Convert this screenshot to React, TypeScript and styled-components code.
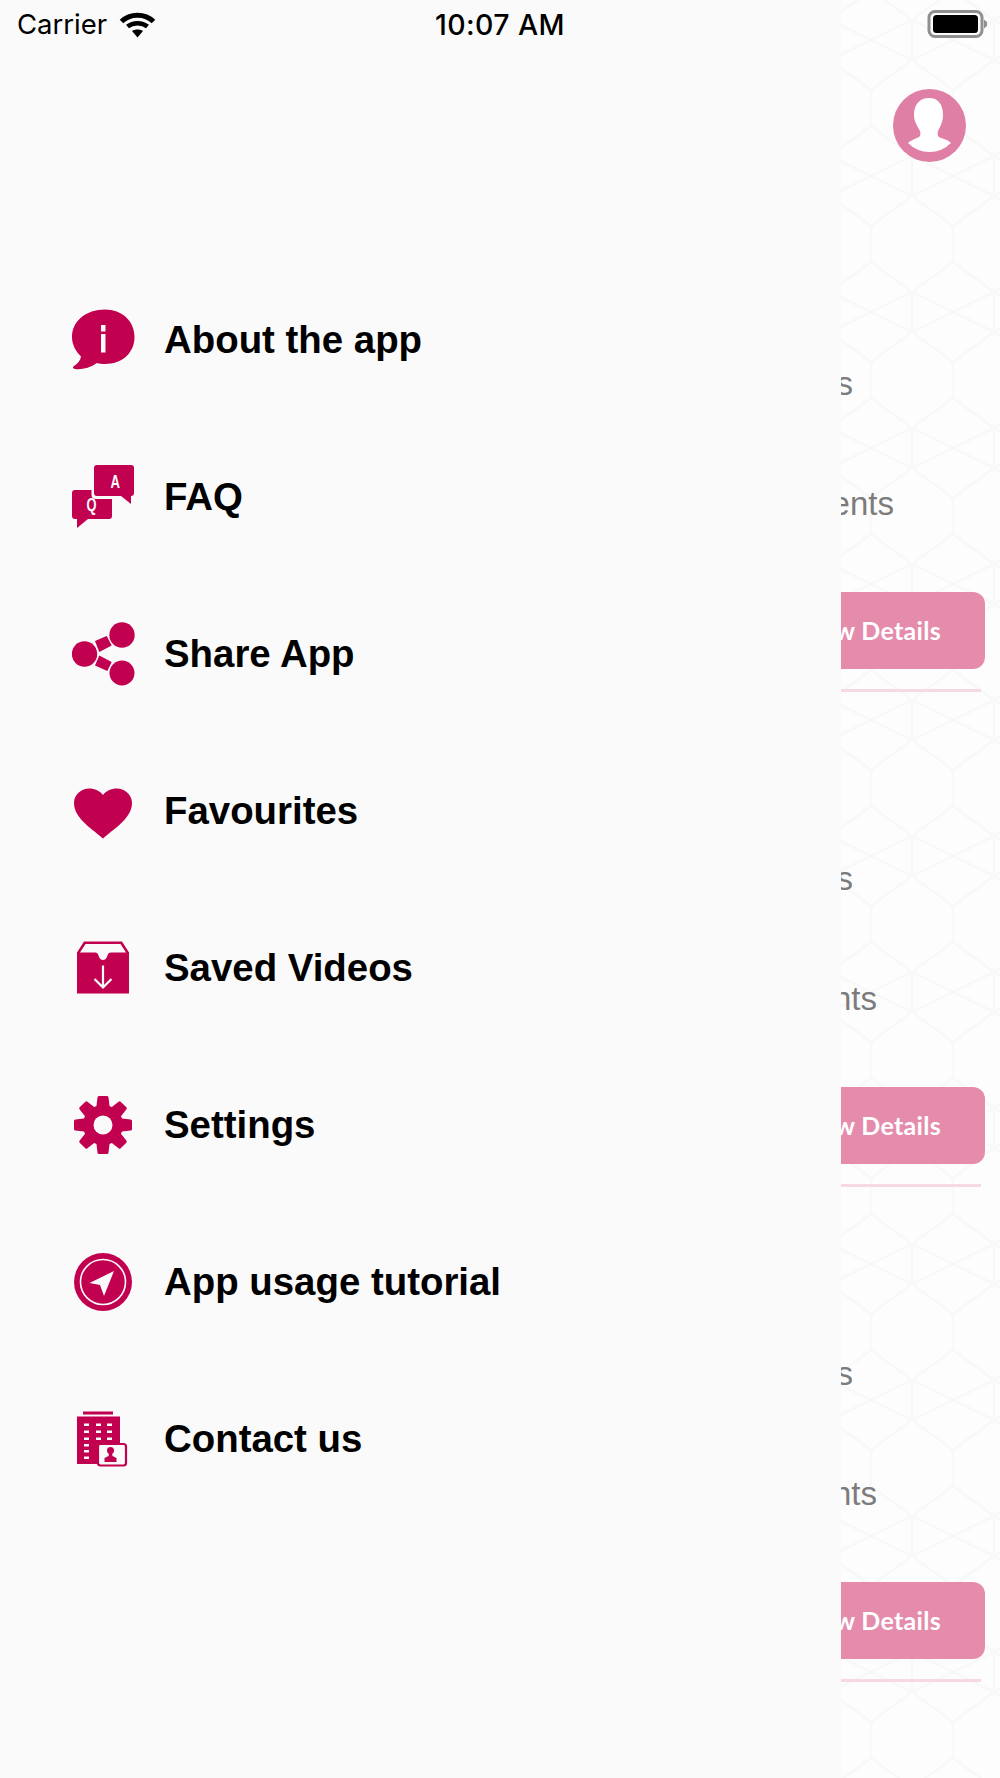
import React from 'react';
import styled, { createGlobalStyle } from 'styled-components';

const CRIMSON = '#c1004f';
const PAPER = '#fafafa';

const GlobalStyle = createGlobalStyle`
  html, body {
    margin: 0;
    padding: 0;
    background: #fdfdfd;
  }
`;

const Screen = styled.div`
  position: relative;
  display: flex;
  width: 1000px;
  height: 1778px;
  overflow: hidden;
`;

const StatusBar = styled.div`
  position: absolute;
  top: 0;
  left: 0;
  right: 0;
  height: 48px;
  padding: 0 17px;
  box-sizing: border-box;
  display: grid;
  grid-template-columns: 1fr auto 1fr;
  align-items: center;
  font-family: Inter, 'Liberation Sans', sans-serif;
  font-size: 27.500px;
  color: #000;
  z-index: 2;
`;

const Carrier = styled.div`
  display: flex;
  align-items: center;
  gap: 12px;
`;

const Clock = styled.div`
  font-weight: 500;
  font-size: 28.500px;
  letter-spacing: 0.4px;
`;

const BatteryWrap = styled.div`
  display: flex;
  justify-content: flex-end;
  margin-right: -4px;
`;

const Drawer = styled.nav`
  width: 841px;
  flex-shrink: 0;
  background: ${PAPER};
  padding-top: 261px;
  box-sizing: border-box;
`;

const MenuRow = styled.div`
  height: 157px;
  display: flex;
  align-items: center;
  padding-left: 72px;
  gap: 28px;
`;

const IconSlot = styled.div`
  width: 64px;
  height: 64px;
  flex-shrink: 0;
  svg {
    display: block;
    width: 64px;
    height: 64px;
  }
`;

const MenuLabel = styled.span`
  font-family: 'Liberation Sans', Arial, sans-serif;
  font-weight: 700;
  font-size: 38.400px;
  color: #000;
`;

const Backdrop = styled.div`
  position: relative;
  flex: 1;
  min-width: 0;
  overflow: hidden;
  background: #fdfdfd;
`;

const PatternLayer = styled.svg`
  position: absolute;
  inset: 0;
  width: 100%;
  height: 100%;
`;

const BackdropContent = styled.div`
  position: relative;
  padding-top: 89px;
`;

const AvatarRow = styled.div`
  display: flex;
  justify-content: flex-end;
  padding-right: 34px;
  height: 275px;
`;

const Card = styled.div`
  height: 495px;
  white-space: nowrap;
`;

const CardLine = styled.div<{ $inset: number; $after: number }>`
  display: flex;
  justify-content: flex-end;
  height: 39px;
  line-height: 39px;
  padding-right: ${(p) => p.$inset}px;
  margin-bottom: ${(p) => p.$after}px;
  font-family: 'Liberation Sans', Arial, sans-serif;
  font-size: 33px;
  color: #7c7c7c;
`;

const DetailsButton = styled.div`
  height: 75px;
  padding: 0 44px 2px 0;
  margin-right: 15px;
  border-radius: 0 12px 12px 0;
  background: #e58cad;
  display: flex;
  align-items: center;
  justify-content: flex-end;
  overflow: hidden;
  font-family: Lato, 'Liberation Sans', sans-serif;
  font-weight: 700;
  font-size: 25px;
  letter-spacing: 0.3px;
  color: #fff;
`;

const Divider = styled.div`
  height: 3px;
  margin: 20px 19px 0 0;
  background: #f7d9e5;
`;

function Wifi() {
  return (
    <svg width="37" height="27" viewBox="0 0 37 27">
      <path fill="none" stroke="#000" strokeWidth="5" d="M2.500 10.500 C11 2 26 2 34.500 10.500" />
      <path fill="none" stroke="#000" strokeWidth="4.500" d="M8.500 15.500 C14 11 23 11 28.500 15.500" />
      <path d="M13 20 C16 18 21 18 24 20 L18.500 26.500 Z" fill="#000" />
    </svg>
  );
}

function Battery() {
  return (
    <svg width="60" height="28" viewBox="0 0 60 28">
      <rect x="2" y="1.500" width="53" height="25" rx="6" fill="none" stroke="#8f8f8f" strokeWidth="3" />
      <rect x="6" y="5" width="45" height="18" rx="3.500" fill="#000" />
      <path d="M57 9.500 L60 12 V16 L57 18.500 Z" fill="#8f8f8f" />
    </svg>
  );
}

function Avatar() {
  return (
    <svg width="73" height="73" viewBox="0 0 73 73">
      <circle cx="36.500" cy="36.500" r="36.500" fill="#df7fa6" />
      <path
        fill="#fff"
        d="M36 9 C27 9 21 15 21 26 C21 33 25 38 27 42 C28 46 27 48 24 49 C21 50 17 52 15 54 Q24 63 36.500 63 Q49 63 58 54 C55 51 51 50 48 49 C45 48 44 46 45 42 C47 38 50 33 50 26 C50 15 45 9 36 9 Z"
      />
    </svg>
  );
}

function InfoIcon() {
  return (
    <svg viewBox="0 0 64 64">
      <path
        fill={CRIMSON}
        d="M33 1.500 C50 1.500 62.500 13 62.500 29 C62.500 45 50 56 33 56 C30 56 27 55.600 25 55 C18 60 9 62 3 61 C0.500 60.500 0.500 59 2 58 C6 55.500 8.500 52.500 9 48.500 C4 43.500 0 37 0 29 C0 13 14 1.500 33 1.500 Z"
      />
      <rect x="29" y="17" width="4.500" height="6.500" fill={PAPER} />
      <rect x="29" y="26" width="4.500" height="18.500" fill={PAPER} />
    </svg>
  );
}

function FaqIcon() {
  return (
    <svg viewBox="0 0 64 64">
      <path
        fill={CRIMSON}
        d="M25 0 H59 Q62 0 62 3 V28 Q62 31 59 31 V39 L49 31 H25 Q22 31 22 28 V3 Q22 0 25 0 Z"
      />
      <path
        fill={CRIMSON}
        d="M3 25 H19.500 V30 Q19.500 34 24 34 H40 V51 Q40 54 37 54 H16 L5 63 V54 H3 Q0 54 0 51 V28 Q0 25 3 25 Z"
      />
      <text x="38.500" y="22.500" fontFamily="'Liberation Sans', sans-serif" fontWeight="700" fontSize="19" textLength="9.500" lengthAdjust="spacingAndGlyphs" fill={PAPER}>A</text>
      <text x="14.500" y="46" fontFamily="'Liberation Sans', sans-serif" fontWeight="700" fontSize="19" textLength="10" lengthAdjust="spacingAndGlyphs" fill={PAPER}>Q</text>
    </svg>
  );
}

function ShareIcon() {
  return (
    <svg viewBox="0 0 64 64">
      <circle cx="50" cy="13" r="12.700" fill={CRIMSON} />
      <circle cx="12.500" cy="32" r="12.700" fill={CRIMSON} />
      <circle cx="50" cy="51" r="12.500" fill={CRIMSON} />
      <polygon points="23,19 34.700,14 39.700,23.500 27.300,30" fill={CRIMSON} />
      <polygon points="27.300,33.500 39.700,40 35.300,49 23,43.500" fill={CRIMSON} />
    </svg>
  );
}

function HeartIcon() {
  return (
    <svg viewBox="0 0 64 64">
      <path
        fill={CRIMSON}
        d="M31 59.500 C22 51 2 40 2 24 C2 15 10 9.500 17 9.500 C23 9.500 28 12 31 16 C34 12 39 9.500 45 9.500 C52 9.500 60 15 60 24 C60 40 40 51 31 59.500 Z"
      />
    </svg>
  );
}

function BoxIcon() {
  return (
    <svg viewBox="0 0 64 64">
      <g transform="translate(0 5.500)">
        <path
          fill={CRIMSON}
          fillRule="evenodd"
          d="M12 0 H50 L57 11 V52 H5 V11 Z M13.500 2.500 L8 11 H23 C25 11 26 12 26.500 14 C27.500 17 29 18.500 31 18.500 C33 18.500 34.500 17 35.500 14 C36 12 37 11 39 11 H54 L48.500 2.500 Z"
        />
        <path
          fill="none"
          stroke={PAPER}
          strokeWidth="2.200"
          d="M31 24 V46 M22.500 37.500 L31 46 L39.500 37.500"
        />
      </g>
    </svg>
  );
}

function GearIcon() {
  const teeth = [0, 45, 90, 135, 180, 225, 270, 315];
  return (
    <svg viewBox="0 0 64 64">
      <g fill={CRIMSON}>
        {teeth.map((angle) => (
          <path
            key={angle}
            d="M25.500 4.500 Q25.500 3 27 3 H35 Q36.500 3 36.500 4.500 L38 17 H24 Z"
            transform={`rotate(${angle} 31 32)`}
          />
        ))}
        <circle cx="31" cy="32" r="20" />
      </g>
      <circle cx="31" cy="32" r="9.500" fill={PAPER} />
    </svg>
  );
}

function NavIcon() {
  return (
    <svg viewBox="0 0 64 64">
      <circle cx="31" cy="32" r="29" fill={CRIMSON} />
      <circle cx="31" cy="32" r="22.500" fill="none" stroke={PAPER} strokeWidth="1.600" />
      <polygon points="17.500,33 42,21 32,46 28,35" fill={PAPER} />
    </svg>
  );
}

function BuildingIcon() {
  const windows: [number, number][] = [];
  [12, 24, 35].forEach((x) => {
    [16.500, 23.500, 30.500].forEach((y) => windows.push([x, y]));
  });
  [37, 43, 49.500].forEach((y) => windows.push([12, y]));
  return (
    <svg viewBox="0 0 64 64">
      <rect x="11" y="4.500" width="30" height="3" fill={CRIMSON} />
      <rect x="5" y="9.500" width="43" height="47.500" fill={CRIMSON} />
      {windows.map(([x, y]) => (
        <rect key={`${x}-${y}`} x={x} y={y} width="5" height="2.500" fill={PAPER} />
      ))}
      <rect x="26" y="37" width="28" height="21.500" rx="2.500" fill={PAPER} stroke={CRIMSON} strokeWidth="2.200" />
      <circle cx="38.500" cy="43.500" r="3.500" fill={CRIMSON} />
      <path fill={CRIMSON} d="M37 46 H40 L40.500 49 L44.500 51 V55 H32.500 V51 L36.500 49 Z" />
    </svg>
  );
}

function ArabesquePattern() {
  return (
    <PatternLayer aria-hidden="true">
      <defs>
        <pattern id="girih" width="82" height="136" patternUnits="userSpaceOnUse" x="-11" y="-10">
          <g fill="none" stroke="#f9f8f9" strokeWidth="2.500">
            <path d="M41 0 L82 30 V70 L41 100 L0 70 V30 Z" />
            <path d="M41 100 V136 M0 30 L82 70 M82 30 L0 70" />
          </g>
        </pattern>
      </defs>
      <rect width="100%" height="100%" fill="url(#girih)" />
    </PatternLayer>
  );
}

const MENU = [
  { label: 'About the app', Icon: InfoIcon },
  { label: 'FAQ', Icon: FaqIcon },
  { label: 'Share App', Icon: ShareIcon },
  { label: 'Favourites', Icon: HeartIcon },
  { label: 'Saved Videos', Icon: BoxIcon },
  { label: 'Settings', Icon: GearIcon },
  { label: 'App usage tutorial', Icon: NavIcon },
  { label: 'Contact us', Icon: BuildingIcon },
];

const CARDS = [
  { word: 'Events', inset: 106 },
  { word: 'Moments', inset: 123 },
  { word: 'Moments', inset: 123 },
];

export default function App(): JSX.Element {
  return (
    <Screen>
      <GlobalStyle />
      <StatusBar>
        <Carrier>
          Carrier
          <Wifi />
        </Carrier>
        <Clock>10:07 AM</Clock>
        <BatteryWrap>
          <Battery />
        </BatteryWrap>
      </StatusBar>
      <Drawer>
        {MENU.map(({ label, Icon }) => (
          <MenuRow key={label}>
            <IconSlot>
              <Icon />
            </IconSlot>
            <MenuLabel>{label}</MenuLabel>
          </MenuRow>
        ))}
      </Drawer>
      <Backdrop>
        <ArabesquePattern />
        <BackdropContent>
          <AvatarRow>
            <Avatar />
          </AvatarRow>
          {CARDS.map(({ word, inset }, i) => (
            <Card key={i}>
              <CardLine $inset={147} $after={81}>Items</CardLine>
              <CardLine $inset={inset} $after={69}>{word}</CardLine>
              <DetailsButton>View Details</DetailsButton>
              <Divider />
            </Card>
          ))}
        </BackdropContent>
      </Backdrop>
    </Screen>
  );
}
